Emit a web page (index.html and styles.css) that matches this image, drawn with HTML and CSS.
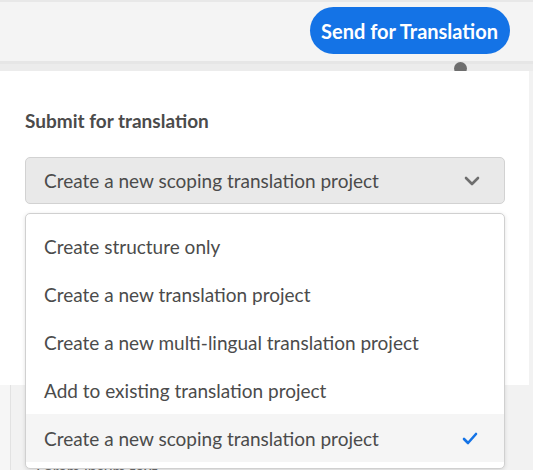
FILE: index.html
```html
<!DOCTYPE html>
<html lang="en">
<head>
<meta charset="utf-8">
<title>Submit for translation</title>
<link rel="stylesheet" href="styles.css">
</head>
<body>
<div class="app">
  <header class="topbar">
    <button class="send-btn">Send for Translation</button>
  </header>
  <div class="band"></div>
  <div class="subrow"><span class="knob"></span></div>
  <div class="stage">
    <section class="panel">
      <h2 class="panel-title">Submit for translation</h2>
      <div class="select">
        <span class="select-value">Create a new scoping translation project</span>
        <svg class="chevron" width="16" height="10" viewBox="0 0 16 10"><path d="M2 2 L8 8 L14 2" fill="none" stroke="#6e6e6e" stroke-width="2.6" stroke-linecap="round" stroke-linejoin="round"/></svg>
      </div>
    </section>
    <div class="below">
      <div class="below-edge"></div>
      <div class="below-text">Lorem ipsum text</div>
    </div>
    <ul class="menu">
      <li class="item">Create structure only</li>
      <li class="item">Create a new translation project</li>
      <li class="item">Create a new multi-lingual translation project</li>
      <li class="item">Add to existing translation project</li>
      <li class="item selected">Create a new scoping translation project
        <svg class="check" width="16" height="13" viewBox="0 0 16 13"><path d="M2 7 L6 11 L14 2" fill="none" stroke="#1473e6" stroke-width="2.6" stroke-linecap="round" stroke-linejoin="round"/></svg>
      </li>
    </ul>
  </div>
</div>
</body>
</html>
```
FILE: styles.css
```css
* { box-sizing: border-box; }
html, body { margin: 0; padding: 0; }
body {
  width: 533px;
  height: 470px;
  overflow: hidden;
  background: #f2f2f2;
  font-family: Lato, "Open Sans", sans-serif;
  color: #4b4b4b;
}
.app { display: flex; flex-direction: column; height: 470px; }
.topbar {
  height: 61px;
  background: #f4f4f4;
  border-top: 2px solid #e8e8e8;
  display: flex;
  align-items: center;
  justify-content: flex-end;
  padding-right: 23px;
}
.send-btn {
  height: 47px;
  padding: 0 12px 0 11px;
  border: none;
  border-radius: 24px;
  background: #1473e6;
  color: #fff;
  font-family: Lato, sans-serif;
  font-weight: 700;
  font-size: 20px;
  margin-top: -2px;
}
.band { height: 3px; background: #e6e6e6; }
.subrow {
  height: 7px;
  background: #ececec;
  position: relative;
}
.knob {
  position: absolute;
  left: 454px;
  top: -2px;
  width: 13px;
  height: 13px;
  border-radius: 50%;
  background: #6e6e6e;
}
.stage { position: relative; flex: 1; }
.panel {
  width: 529px;
  height: 314px;
  background: #fff;
  padding: 37px 25px 0 25px;
  position: relative;
}
.panel-title {
  margin: 0 0 24px 0;
  font-size: 19px;
  font-weight: 700;
  color: #4b4b4b;
  line-height: 25px;
}
.select {
  width: 480px;
  height: 47px;
  background: #e9e9e9;
  border: 1px solid #d2d2d2;
  border-radius: 5px;
  display: flex;
  align-items: center;
  justify-content: space-between;
  padding: 0 24px 0 18px;
  font-size: 19px;
}
.chevron { display: block; }
.below {
  height: 85px;
  display: flex;
  position: relative;
}
.below-edge { width: 11px; border-right: 1px solid #e2e2e2; background: #f6f6f6; }
.below-text {
  position: absolute;
  left: 36px;
  top: 76px;
  font-size: 16px;
  line-height: 20px;
  color: #6a6a6a;
}
.menu {
  position: absolute;
  left: 25px;
  top: 142px;
  width: 480px;
  height: 256px;
  margin: 0;
  padding: 8px 0 0 0;
  list-style: none;
  background: #fff;
  border: 1px solid #d0d0d0;
  border-radius: 5px;
  box-shadow: 0 1px 4px rgba(0,0,0,0.12);
  overflow: hidden;
}
.item {
  height: 48px;
  display: flex;
  align-items: center;
  justify-content: space-between;
  padding: 0 26px 0 18px;
  font-size: 19px;
  color: #4b4b4b;
}
.item.selected { background: #f5f5f5; }
.check { display: block; }
```
